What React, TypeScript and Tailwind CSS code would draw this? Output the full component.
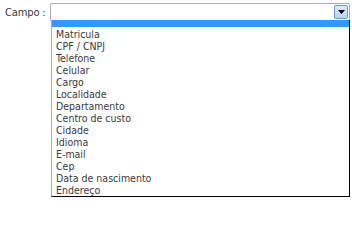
// Form field with an open native-looking dropdown list.

import React from 'react';

const options = [
  'Matricula',
  'CPF / CNPJ',
  'Telefone',
  'Celular',
  'Cargo',
  'Localidade',
  'Departamento',
  'Centro de custo',
  'Cidade',
  'Idioma',
  'E-mail',
  'Cep',
  'Data de nascimento',
  'Endereço',
];

export default function App() {
  return (
    <div className="relative w-[352px] h-[200px] bg-white overflow-hidden font-['DejaVu_Sans_Condensed','Liberation_Sans',sans-serif] text-[10.5px] text-[#3a3a3a]">
      {/* label + closed select */}
      <div className="flex items-start pt-[3px] pl-[5px]">
        <label className="w-[45px] leading-[17px] pt-[1px] font-['DejaVu_Sans',sans-serif] text-[10px] tracking-[-0.2px]">Campo :</label>
        <div className="relative w-[300px] h-[18px] bg-white border border-[#a5acb2] rounded-[2px] flex justify-end items-center pr-[1px]">
          <div className="w-[14px] h-[14px] border border-[#6f97c8] rounded-[2px] bg-gradient-to-b from-[#dcebfc] to-[#b5d2f4] flex items-center justify-center">
            <svg width="7" height="4" viewBox="0 0 7 4">
              <path d="M0 0h7L3.5 4z" fill="#000" />
            </svg>
          </div>
        </div>
      </div>

      {/* open option list, drawn over the page */}
      <div className="absolute left-[51px] top-[20px] w-[299px] h-[177px] bg-white border-l border-l-[#a5acb2] border-r border-b border-r-black border-b-black">
        <div className="h-[7px] bg-[#3399ff]" />
        <ul className="pt-[1px]">
          {options.map((o) => (
            <li key={o} className="h-[12px] leading-[12px] pl-[4px] whitespace-nowrap">
              {o}
            </li>
          ))}
        </ul>
      </div>
    </div>
  );
}
